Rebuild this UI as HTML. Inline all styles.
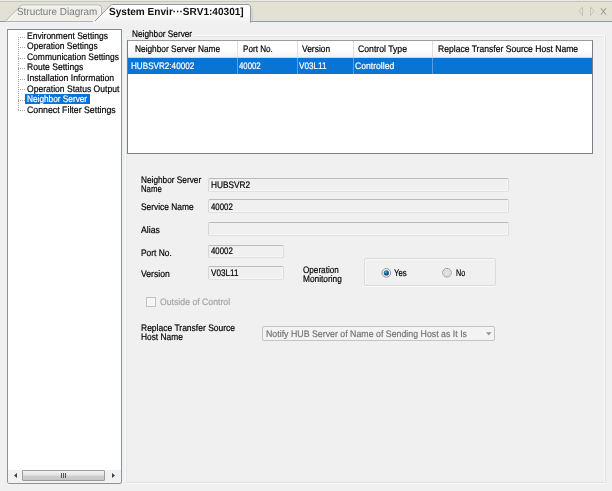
<!DOCTYPE html>
<html><head><meta charset="utf-8">
<style>
html,body{margin:0;padding:0;}
body{width:612px;height:491px;overflow:hidden;background:#f0f0f0;font-family:"Liberation Sans",sans-serif;font-size:9px;color:#000;position:relative;}
.a{position:absolute;white-space:nowrap;}
.t{position:absolute;white-space:nowrap;transform-origin:0 50%;-webkit-text-stroke:0.2px;}
.f{position:absolute;background:#f0f0f0;border:1px solid;border-color:#bababa #dcdcdc #e1e1e1 #d6d6d6;border-radius:2px;box-shadow:inset -1px -1px 0 #f7f7f7;box-sizing:border-box;}
</style></head><body>
<!-- tab bar -->
<div class="a" style="left:0;top:0;width:612px;height:22px;background:#e3e1d4;"></div>
<div class="a" style="left:0;top:0;width:612px;height:1px;background:#e8e7e1;"></div>
<div class="a" style="left:0;top:1px;width:612px;height:1px;background:#c6c5be;"></div>
<div class="a" style="left:0;top:20px;width:612px;height:1px;background:#dee6e5;"></div>
<div class="a" style="left:0;top:21px;width:612px;height:1px;background:#8f9aa2;"></div>
<svg class="a" style="left:0;top:0" width="612" height="24">
<defs><linearGradient id="tg" x1="0" y1="0" x2="0" y2="1"><stop offset="0" stop-color="#ffffff"/><stop offset="0.6" stop-color="#fbfbfb"/><stop offset="1" stop-color="#f1f1f1"/></linearGradient></defs>
<path d="M5 21.5 L21.5 5 H98.5 Q101.5 5 101.5 8 V21.5 Z" fill="#efeee7" stroke="#b1b4b8" stroke-width="1"/>
<path d="M7.5 21 L22 6.2 H98.5 Q100.3 6.2 100.3 8 V21" fill="none" stroke="#fbfbf8" stroke-width="1"/>
<path d="M251.5 7 V21 H253 V9 Z" fill="#d2d0c6"/>
<path d="M93.6 22.5 L110.6 5.2 Q111.3 4.5 112.8 4.5 H248 Q250.5 4.5 250.5 7 V22.5 Z" fill="url(#tg)" stroke="#939ca6" stroke-width="1"/>
<rect x="93" y="21" width="157" height="3" fill="#f1f1f1"/>
<rect x="250" y="21" width="1" height="1" fill="#939ca6"/>
<path d="M582.5 7 L579 11.2 L582.5 15.5 Z" fill="#e6e4da" stroke="#c3c2bb" stroke-width="1"/>
<path d="M590.5 7 L594 11.2 L590.5 15.5 Z" fill="#e6e4da" stroke="#c3c2bb" stroke-width="1"/>
<path d="M601 8.2 L606 14.6 M606 8.2 L601 14.6" stroke="#8a8a88" stroke-width="1" fill="none"/>
</svg>

<!-- left tree panel -->
<div class="a" style="left:7px;top:29px;width:115px;height:455px;box-sizing:border-box;border:1px solid #8c9299;border-top-color:#81878e;border-radius:0 0 3px 3px;background:#fff;"></div>
<svg class="a" style="left:0;top:0" width="130" height="120">
<path d="M18.5 37 V111 M18 37.5 H25 M18 47.5 H25 M18 58.5 H25 M18 68.5 H25 M18 79.5 H25 M18 89.5 H25 M18 100.5 H25 M18 110.5 H25" stroke="#a6a6a6" stroke-width="1" stroke-dasharray="1 1" fill="none"/>
</svg>
<div class="a" style="left:25px;top:94px;width:65px;height:10px;background:#0a74d4;"></div>
<!-- h scrollbar -->
<div class="a" style="left:8px;top:470px;width:113px;height:13px;background:#f1f1f1;border-radius:0 0 2px 2px;"></div>
<div class="a" style="left:22px;top:470px;width:83px;height:11px;box-sizing:border-box;border:1px solid #9c9c9c;border-radius:1px;background:linear-gradient(#f2f2f2,#e5e5e5 45%,#cfcfcf 55%,#c6c6c6);"></div>
<svg class="a" style="left:8px;top:470px" width="113" height="11">
<path d="M9 3 L6 5.5 L9 8 Z" fill="#404040"/><path d="M104 3 L107 5.5 L104 8 Z" fill="#404040"/>
<path d="M53.5 3 V8 M55.5 3 V8 M57.5 3 V8" stroke="#555" stroke-width="1"/>
</svg>

<!-- right panel -->
<div class="a" style="left:125px;top:35px;width:480px;height:448px;box-sizing:border-box;border:1px solid #fafafa;border-bottom-color:#e0e0e0;border-radius:2px;box-shadow:inset 1px 1px 0 #e6e6e6,1px 0 0 #e0e0e0,0 1px 0 #fafafa;"></div>
<div class="a" style="left:130px;top:30px;width:64px;height:9px;background:#f0f0f0;"></div>
<!-- table -->
<div class="a" style="left:127px;top:40px;width:466px;height:114px;box-sizing:border-box;border:1px solid #7c8086;border-top-color:#989ba0;background:#fff;"></div>
<div class="a" style="left:128px;top:41px;width:464px;height:17px;background:linear-gradient(#ffffff,#ffffff 50%,#f2f3f5);border-bottom:1px solid #d5d5d5;box-sizing:border-box;"></div>
<div class="a" style="left:128px;top:58px;width:464px;height:16px;background:#0a74d4;"></div>
<div class="a" style="left:237px;top:41px;width:1px;height:16px;background:#dedfe1;"></div>
<div class="a" style="left:297px;top:41px;width:1px;height:16px;background:#dedfe1;"></div>
<div class="a" style="left:353px;top:41px;width:1px;height:16px;background:#dedfe1;"></div>
<div class="a" style="left:432px;top:41px;width:1px;height:16px;background:#dedfe1;"></div>
<div class="a" style="left:237px;top:58px;width:1px;height:16px;background:#5a9de0;"></div>
<div class="a" style="left:297px;top:58px;width:1px;height:16px;background:#5a9de0;"></div>
<div class="a" style="left:353px;top:58px;width:1px;height:16px;background:#5a9de0;"></div>
<div class="a" style="left:432px;top:58px;width:1px;height:16px;background:#5a9de0;"></div>

<!-- form -->
<div class="f" style="left:208px;top:178px;width:301px;height:14px;"></div>
<div class="f" style="left:208px;top:199px;width:301px;height:14px;"></div>
<div class="f" style="left:208px;top:222px;width:301px;height:14px;"></div>
<div class="f" style="left:208px;top:245px;width:76px;height:13px;"></div>
<div class="f" style="left:208px;top:266px;width:76px;height:14px;"></div>
<div class="a" style="left:364px;top:258px;width:132px;height:28px;box-sizing:border-box;border:1px solid #dcdcdc;border-radius:2px;box-shadow:inset 1px 1px 0 #f9f9f9,0 1px 0 #f9f9f9;"></div>
<svg class="a" style="left:380px;top:266px" width="80" height="14">
<defs><radialGradient id="rg" cx="0.38" cy="0.35" r="0.7"><stop offset="0" stop-color="#60c0ea"/><stop offset="0.4" stop-color="#1f6eac"/><stop offset="1" stop-color="#123560"/></radialGradient>
<radialGradient id="rn" cx="0.5" cy="0.5" r="0.6"><stop offset="0" stop-color="#d9d9d9"/><stop offset="0.7" stop-color="#e9e9e9"/><stop offset="1" stop-color="#fafafa"/></radialGradient></defs>
<circle cx="6.3" cy="6.9" r="4.3" fill="#fafbfc" stroke="#8f959c" stroke-width="1"/>
<circle cx="6.3" cy="6.9" r="2.6" fill="url(#rg)"/>
<circle cx="67" cy="6.7" r="4.3" fill="#f2f2f2" stroke="#9a9c9f" stroke-width="1"/><circle cx="67" cy="6.7" r="2.7" fill="#e4e4e4" stroke="#cfcfcf" stroke-width="0.8"/>
</svg>
<div class="a" style="left:146px;top:297px;width:10px;height:10px;box-sizing:border-box;border:1px solid #bfc3c8;background:#f6f6f6;"></div>
<div class="a" style="left:262px;top:326px;width:233px;height:15px;box-sizing:border-box;border:1px solid #c4c4c4;border-radius:2px;background:#f3f3f3;"></div>
<svg class="a" style="left:485px;top:331px" width="8" height="6"><path d="M1 1.3 H6.6 L3.8 4.6 Z" fill="#969696"/></svg>
<div class="a" style="left:0;top:0;width:612px;height:491px;will-change:transform;">
<div class="t" style="left:16.8px;top:6px;font-size:10.3px;line-height:12px;height:12px;color:#777a7f;-webkit-text-stroke:0;transform:scaleX(0.9599) rotate(0.03deg);">Structure Diagram</div>
<div class="t" style="left:108.8px;top:6px;font-size:10.3px;line-height:12px;height:12px;color:#101010;font-weight:bold;-webkit-text-stroke:0;transform:scaleX(0.9779) rotate(0.03deg);">System Envir···SRV1:40301]</div>
<div class="t" style="left:26.8px;top:30px;font-size:9.5px;line-height:12px;height:12px;color:#000;transform:scaleX(0.8959) rotate(0.03deg);">Environment Settings</div>
<div class="t" style="left:26.8px;top:40px;font-size:9.5px;line-height:12px;height:12px;color:#000;transform:scaleX(0.8985) rotate(0.03deg);">Operation Settings</div>
<div class="t" style="left:26.8px;top:51px;font-size:9.5px;line-height:12px;height:12px;color:#000;transform:scaleX(0.8925) rotate(0.03deg);">Communication Settings</div>
<div class="t" style="left:26.8px;top:61px;font-size:9.5px;line-height:12px;height:12px;color:#000;transform:scaleX(0.9017) rotate(0.03deg);">Route Settings</div>
<div class="t" style="left:26.8px;top:72px;font-size:9.5px;line-height:12px;height:12px;color:#000;transform:scaleX(0.9122) rotate(0.03deg);">Installation Information</div>
<div class="t" style="left:26.8px;top:83px;font-size:9.5px;line-height:12px;height:12px;color:#000;transform:scaleX(0.9009) rotate(0.03deg);">Operation Status Output</div>
<div class="t" style="left:27.2px;top:93px;font-size:9.5px;line-height:12px;height:12px;color:#fff;transform:scaleX(0.8689) rotate(0.03deg);">Neighbor Server</div>
<div class="t" style="left:26.8px;top:104px;font-size:9.5px;line-height:12px;height:12px;color:#000;transform:scaleX(0.9229) rotate(0.03deg);">Connect Filter Settings</div>
<div class="t" style="left:131.7px;top:28px;font-size:9.5px;line-height:12px;height:12px;color:#000;transform:scaleX(0.8689) rotate(0.03deg);">Neighbor Server</div>
<div class="t" style="left:134.7px;top:43px;font-size:9.5px;line-height:12px;height:12px;color:#000;transform:scaleX(0.8759) rotate(0.03deg);">Neighbor Server Name</div>
<div class="t" style="left:242.8px;top:43px;font-size:9.5px;line-height:12px;height:12px;color:#000;transform:scaleX(0.8549) rotate(0.03deg);">Port No.</div>
<div class="t" style="left:302.3px;top:43px;font-size:9.5px;line-height:12px;height:12px;color:#000;transform:scaleX(0.8899) rotate(0.03deg);">Version</div>
<div class="t" style="left:358.0px;top:43px;font-size:9.5px;line-height:12px;height:12px;color:#000;transform:scaleX(0.9124) rotate(0.03deg);">Control Type</div>
<div class="t" style="left:437.6px;top:43px;font-size:9.5px;line-height:12px;height:12px;color:#000;transform:scaleX(0.9025) rotate(0.03deg);">Replace Transfer Source Host Name</div>
<div class="t" style="left:130.6px;top:60px;font-size:9.5px;line-height:12px;height:12px;color:#fff;transform:scaleX(0.8548) rotate(0.03deg);">HUBSVR2:40002</div>
<div class="t" style="left:239.2px;top:60px;font-size:9.5px;line-height:12px;height:12px;color:#fff;transform:scaleX(0.8213) rotate(0.03deg);">40002</div>
<div class="t" style="left:299.1px;top:60px;font-size:9.5px;line-height:12px;height:12px;color:#fff;transform:scaleX(0.8608) rotate(0.03deg);">V03L11</div>
<div class="t" style="left:354.8px;top:60px;font-size:9.5px;line-height:12px;height:12px;color:#fff;transform:scaleX(0.9074) rotate(0.03deg);">Controlled</div>
<div class="t" style="left:141.0px;top:174px;font-size:9.5px;line-height:12px;height:12px;color:#000;transform:scaleX(0.8703) rotate(0.03deg);">Neighbor Server</div>
<div class="t" style="left:141.0px;top:183px;font-size:9.5px;line-height:12px;height:12px;color:#000;transform:scaleX(0.8168) rotate(0.03deg);">Name</div>
<div class="t" style="left:210.9px;top:179px;font-size:9.5px;line-height:12px;height:12px;color:#000;transform:scaleX(0.8735) rotate(0.03deg);">HUBSVR2</div>
<div class="t" style="left:140.6px;top:201px;font-size:9.5px;line-height:12px;height:12px;color:#000;transform:scaleX(0.8832) rotate(0.03deg);">Service Name</div>
<div class="t" style="left:210.9px;top:201px;font-size:9.5px;line-height:12px;height:12px;color:#000;transform:scaleX(0.8251) rotate(0.03deg);">40002</div>
<div class="t" style="left:141.0px;top:224px;font-size:9.5px;line-height:12px;height:12px;color:#000;transform:scaleX(0.9129) rotate(0.03deg);">Alias</div>
<div class="t" style="left:141.0px;top:247px;font-size:9.5px;line-height:12px;height:12px;color:#000;transform:scaleX(0.8864) rotate(0.03deg);">Port No.</div>
<div class="t" style="left:210.9px;top:245px;font-size:9.5px;line-height:12px;height:12px;color:#000;transform:scaleX(0.8251) rotate(0.03deg);">40002</div>
<div class="t" style="left:141.0px;top:268px;font-size:9.5px;line-height:12px;height:12px;color:#000;transform:scaleX(0.9089) rotate(0.03deg);">Version</div>
<div class="t" style="left:210.9px;top:267px;font-size:9.5px;line-height:12px;height:12px;color:#000;transform:scaleX(0.8608) rotate(0.03deg);">V03L11</div>
<div class="t" style="left:303.1px;top:264px;font-size:9.5px;line-height:12px;height:12px;color:#000;transform:scaleX(0.8578) rotate(0.03deg);">Operation</div>
<div class="t" style="left:303.1px;top:273px;font-size:9.5px;line-height:12px;height:12px;color:#000;transform:scaleX(0.8747) rotate(0.03deg);">Monitoring</div>
<div class="t" style="left:394.4px;top:267px;font-size:9.5px;line-height:12px;height:12px;color:#000;transform:scaleX(0.8258) rotate(0.03deg);">Yes</div>
<div class="t" style="left:455.7px;top:267px;font-size:9.5px;line-height:12px;height:12px;color:#000;transform:scaleX(0.7568) rotate(0.03deg);">No</div>
<div class="t" style="left:159.8px;top:296px;font-size:9.5px;line-height:12px;height:12px;color:#a4a4a4;transform:scaleX(0.9154) rotate(0.03deg);">Outside of Control</div>
<div class="t" style="left:140.5px;top:322px;font-size:9.5px;line-height:12px;height:12px;color:#000;transform:scaleX(0.8954) rotate(0.03deg);">Replace Transfer Source</div>
<div class="t" style="left:140.5px;top:331px;font-size:9.5px;line-height:12px;height:12px;color:#000;transform:scaleX(0.8797) rotate(0.03deg);">Host Name</div>
<div class="t" style="left:265.7px;top:328px;font-size:9.5px;line-height:12px;height:12px;color:#747474;transform:scaleX(0.9262) rotate(0.03deg);">Notify HUB Server of Name of Sending Host as It Is</div>
</div>
</body></html>
